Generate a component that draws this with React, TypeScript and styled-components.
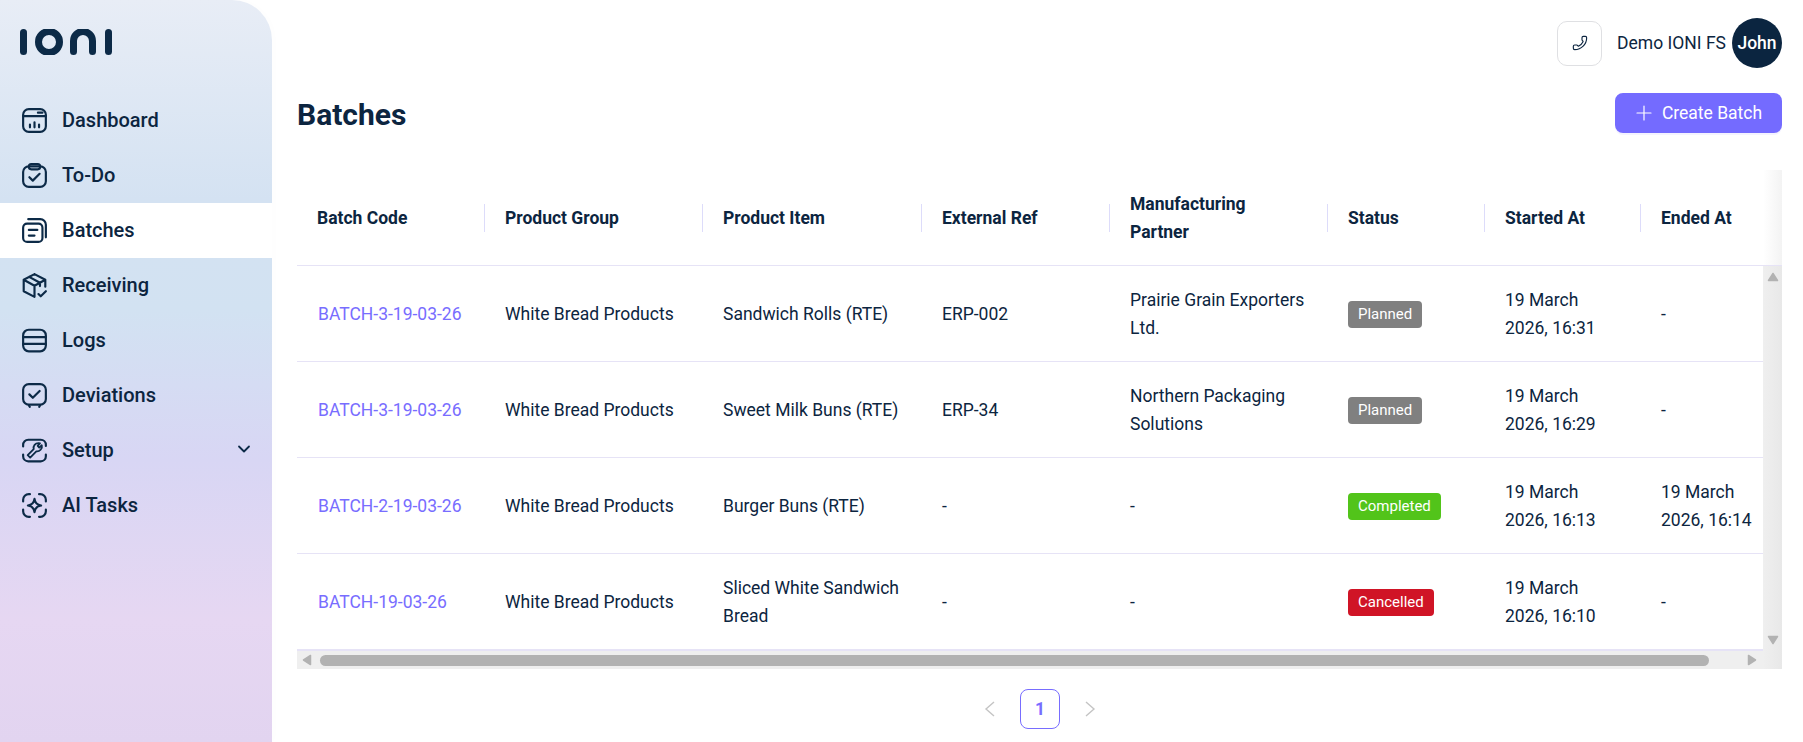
import React from 'react';
import styled, { createGlobalStyle } from 'styled-components';
import { Phone, Plus } from 'lucide-react';

const GlobalStyle = createGlobalStyle`
  html, body { margin: 0; padding: 0; height: 100%; background: #fff; overflow: hidden; }
  * { box-sizing: border-box; }
  body { font-family: Roboto, "Liberation Sans", sans-serif; color: #0c2540; }
`;

const Page = styled.div`
  display: flex;
  width: 1803px;
  height: 742px;
  overflow: hidden;
`;

const Sidebar = styled.aside`
  flex: 0 0 272px;
  height: 742px;
  border-top-right-radius: 40px;
  background: linear-gradient(180deg, #e8edf6 0px, #d4e2f2 200px, #d2e2f2 310px, #d8d6f4 460px, #e6d7f2 620px, #e2d4f0 742px);
  box-shadow: 2px 0 8px rgba(0, 0, 0, 0.01);
`;

const LogoBox = styled.div`
  height: 93px;
  padding: 29px 0 0 20px;
  display: flex;
  align-items: flex-start;
`;

const Nav = styled.nav`
  display: flex;
  flex-direction: column;
`;

const NavRow = styled.div<{ $active?: boolean }>`
  height: 55px;
  display: flex;
  align-items: center;
  padding-left: 22px;
  padding-right: 21px;
  gap: 15px;
  font-size: 20px;
  line-height: 28px;
  font-weight: 500;
  color: #0c2540;
  background: ${(p) => (p.$active ? '#fff' : 'transparent')};
`;

const NavLabel = styled.span`
  flex: 1;
  padding-bottom: 2px;
`;

const NavChevron = styled.svg`
  margin-bottom: 4px;
`;

const Main = styled.main`
  flex: 1;
  min-width: 0;
  padding: 18px 21px 0 25px;
  display: flex;
  flex-direction: column;
`;

const TopBar = styled.header`
  height: 50px;
  display: flex;
  justify-content: flex-end;
  align-items: center;
`;

const PhoneButton = styled.button`
  width: 45px;
  height: 45px;
  padding: 0;
  margin-right: 15px;
  border: 1px solid #dfe0e3;
  border-radius: 10px;
  background: #fff;
  color: #0c2540;
  display: flex;
  align-items: center;
  justify-content: center;
`;

const UserName = styled.span`
  font-size: 17.5px;
  margin-right: 6px;
`;

const Avatar = styled.div`
  width: 50px;
  height: 50px;
  border-radius: 50%;
  background: #0b2540;
  color: #fff;
  font-size: 17.5px;
  font-weight: 500;
  display: flex;
  align-items: center;
  justify-content: center;
`;

const TitleRow = styled.div`
  margin-top: 25px;
  height: 40px;
  display: flex;
  justify-content: space-between;
  align-items: center;
`;

const Title = styled.h1`
  margin: 2px 0 0;
  font-size: 30px;
  font-weight: 700;
  color: #0c2540;
`;

const CreateButton = styled.button`
  width: 167px;
  height: 40px;
  border: 0;
  padding: 0 3px 0 0;
  border-radius: 8px;
  background: #746bff;
  color: #fff;
  font-family: inherit;
  font-size: 17.5px;
  font-weight: 400;
  display: flex;
  align-items: center;
  justify-content: center;
  gap: 6px;
  box-shadow: 0 2px 0 rgba(116, 107, 255, 0.08);
`;

const TableFrame = styled.section`
  margin-top: 37px;
  position: relative;
`;

const columns = '188px 218px 219px 188px 218px 157px 156px 122px';

const HeadRow = styled.div`
  display: grid;
  grid-template-columns: ${columns};
  height: 96px;
  border-bottom: 1px solid #e6e3f6;
  overflow: hidden;
`;

const HeadCell = styled.div`
  position: relative;
  padding: 0 20px;
  display: flex;
  align-items: center;
  font-size: 17.5px;
  font-weight: 700;
  line-height: 28px;
  &:not(:last-child)::after {
    content: '';
    position: absolute;
    right: 0;
    top: 34px;
    height: 28px;
    width: 1px;
    background: #dddcfa;
  }
`;

const EdgeShade = styled.div`
  position: absolute;
  top: 0;
  right: 0;
  width: 19px;
  height: 95px;
  background: linear-gradient(90deg, rgba(238, 238, 238, 0), rgba(238, 238, 238, 0.7));
  pointer-events: none;
`;

const BodyGrid = styled.div`
  display: grid;
  grid-template-columns: 1466px 19px;
  grid-template-rows: 384px 19px;
`;

const RowsArea = styled.div`
  overflow: hidden;
`;

const Row = styled.div`
  display: grid;
  grid-template-columns: ${columns};
  height: 96px;
  border-bottom: 1px solid #e6e3f6;
`;

const Cell = styled.div`
  padding: 0 20px;
  display: flex;
  align-items: center;
  font-size: 17.5px;
  line-height: 28px;
  &:last-child {
    padding-right: 6px;
  }
`;

const BatchLink = styled.a`
  color: #786dff;
  margin-left: 1px;
`;

const tones = { gray: '#808080', green: '#52c41a', red: '#d01426' };

const Badge = styled.span<{ $tone: keyof typeof tones }>`
  display: inline-block;
  height: 27px;
  line-height: 27px;
  margin-top: 2px;
  padding: 0 10px;
  border-radius: 4px;
  font-size: 15px;
  color: #fff;
  background: ${(p) => tones[p.$tone]};
`;

const VTrack = styled.div`
  grid-row: 1 / span 2;
  grid-column: 2;
  background: linear-gradient(90deg, #efefef, #e8e8e8);
  display: flex;
  flex-direction: column;
  justify-content: space-between;
  align-items: center;
  padding: 6px 0 24px;
`;

const HTrack = styled.div`
  background: #efefef;
  border-top: 1px solid #e6e3f6;
  display: flex;
  align-items: center;
  padding: 0 6px 0 5px;
`;

const HThumb = styled.div`
  width: 1389px;
  height: 11px;
  margin: 0 auto 0 8px;
  border-radius: 6px;
  background: #b2b2b2;
`;

const Pager = styled.div`
  margin-top: 20px;
  display: flex;
  justify-content: center;
  align-items: center;
  gap: 22px;
  padding-left: 1px;
`;

const PageNum = styled.div`
  width: 40px;
  height: 40px;
  border: 1px solid #786dff;
  border-radius: 8px;
  color: #786dff;
  font-size: 17.5px;
  font-weight: 700;
  display: flex;
  align-items: center;
  justify-content: center;
`;

const NavIcon: React.FC<{ children: React.ReactNode }> = ({ children }) => (
  <svg width="25" height="25" viewBox="1 1 22 22" fill="none" stroke="#0c2a47" strokeWidth="1.9" strokeLinecap="round" strokeLinejoin="round">
    {children}
  </svg>
);

const Logo = () => (
  <svg width="92" height="26" viewBox="0 0 92 26" fill="none" stroke="#0c2a47" strokeWidth="7" strokeLinecap="round">
    <path d="M3.5 3.5V22.5" />
    <circle cx="29" cy="13" r="10.5" />
    <path d="M53.5 22.5V12a9.5 9.5 0 0 1 19 0V22.5" />
    <path d="M88.5 3.5V22.5" />
  </svg>
);

const items: { label: string; icon: React.ReactNode; active?: boolean; chevron?: boolean }[] = [
  {
    label: 'Dashboard',
    icon: (
      <>
        <rect x="2" y="2" width="20" height="20" rx="5" />
        <path d="M2 8.2H22M15 5.1H19M8 18V15.5M12 18V13.5M16 18V15.5" />
      </>
    ),
  },
  {
    label: 'To-Do',
    icon: (
      <>
        <rect x="2" y="4" width="20" height="18" rx="5" />
        <rect x="7" y="2" width="10" height="4.6" rx="2.2" />
        <path d="M7.5 13.5l3 3 6-6" />
      </>
    ),
  },
  {
    label: 'Batches',
    active: true,
    icon: (
      <>
        <rect x="2" y="6" width="17" height="16" rx="3.5" />
        <path d="M6.5 2H17a5 5 0 0 1 5 5V18M7 11.5H14.5M7 16.5H12" />
      </>
    ),
  },
  {
    label: 'Receiving',
    icon: (
      <>
        <path d="M12 2L21.5 7V13M21.5 7L12 12.2L2.5 7L12 2ZM2.5 7V17L12 22V12.2M7.3 4.4L16.8 9.6V12.5" />
        <path d="M15.5 19.5l2 2 4.5-4.5" />
      </>
    ),
  },
  {
    label: 'Logs',
    icon: (
      <>
        <rect x="2" y="2.5" width="20" height="19" rx="5" />
        <path d="M2 9H22M2 15H22" />
      </>
    ),
  },
  {
    label: 'Deviations',
    icon: (
      <>
        <rect x="2" y="2" width="20" height="18" rx="5" />
        <path d="M7.5 11l3 3 6-6M7 20.5L7.8 22M17 20.5L16.2 22" />
      </>
    ),
  },
  {
    label: 'Setup',
    chevron: true,
    icon: (
      <>
        <path d="M2 8.5V7a4.5 4.5 0 0 1 4.5-4.5H17.5A4.5 4.5 0 0 1 22 7V8M2 15.5V17a4.5 4.5 0 0 0 4.5 4.5H17.5A4.5 4.5 0 0 0 22 17V15.5" />
        <path d="M8.2 18.2L6 16L11.3 10.7C10.7 8 12.6 5.5 15.5 5.5L16.8 5.8L14.8 8L16.2 9.5L18.4 7.4C19.2 10.3 16.5 13.2 13.6 12.8Z" strokeWidth="1.6" />
      </>
    ),
  },
  {
    label: 'AI Tasks',
    icon: (
      <>
        <path d="M2 8.5V7a5 5 0 0 1 5-5H8M16 2H17a5 5 0 0 1 5 5V8.5M22 15.5V17a5 5 0 0 1-5 5H16M8 22H7a5 5 0 0 1-5-5V15.5" />
        <path d="M12 6.2C12.5 10 14 11.5 17.8 12C14 12.5 12.5 14 12 17.8C11.5 14 10 12.5 6.2 12C10 11.5 11.5 10 12 6.2Z" />
      </>
    ),
  },
];

const headers = ['Batch Code', 'Product Group', 'Product Item', 'External Ref', 'Manufacturing Partner', 'Status', 'Started At', 'Ended At'];

const rows: {
  code: string;
  item: string;
  ref: string;
  partner: string;
  status: string;
  tone: keyof typeof tones;
  started: string;
  ended: string;
}[] = [
  { code: 'BATCH-3-19-03-26', item: 'Sandwich Rolls (RTE)', ref: 'ERP-002', partner: 'Prairie Grain Exporters Ltd.', status: 'Planned', tone: 'gray', started: '19 March 2026, 16:31', ended: '-' },
  { code: 'BATCH-3-19-03-26', item: 'Sweet Milk Buns (RTE)', ref: 'ERP-34', partner: 'Northern Packaging Solutions', status: 'Planned', tone: 'gray', started: '19 March 2026, 16:29', ended: '-' },
  { code: 'BATCH-2-19-03-26', item: 'Burger Buns (RTE)', ref: '-', partner: '-', status: 'Completed', tone: 'green', started: '19 March 2026, 16:13', ended: '19 March 2026, 16:14' },
  { code: 'BATCH-19-03-26', item: 'Sliced White Sandwich Bread', ref: '-', partner: '-', status: 'Cancelled', tone: 'red', started: '19 March 2026, 16:10', ended: '-' },
];

const Arrow: React.FC<{ d: string; w: number; h: number }> = ({ d, w, h }) => (
  <svg width={w} height={h} viewBox={`0 0 ${w} ${h}`} fill="#b2b2b2" stroke="#b2b2b2" strokeWidth="1.5" strokeLinejoin="round">
    <path d={d} />
  </svg>
);

const Chevron: React.FC<{ d: string }> = ({ d }) => (
  <svg width="16" height="16" viewBox="0 0 16 16" fill="none" stroke="#c4c4c4" strokeWidth="1.4">
    <path d={d} />
  </svg>
);

export default function App() {
  return (
    <Page>
      <GlobalStyle />
      <Sidebar>
        <LogoBox>
          <Logo />
        </LogoBox>
        <Nav>
          {items.map((it) => (
            <NavRow key={it.label} $active={it.active}>
              <NavIcon>{it.icon}</NavIcon>
              <NavLabel>{it.label}</NavLabel>
              {it.chevron && (
                <NavChevron width="14" height="14" viewBox="0 0 14 14" fill="none" stroke="#0c2a47" strokeWidth="1.8" strokeLinecap="round" strokeLinejoin="round">
                  <path d="M2 4.5L7 9.5L12 4.5" />
                </NavChevron>
              )}
            </NavRow>
          ))}
        </Nav>
      </Sidebar>
      <Main>
        <TopBar>
          <PhoneButton>
            <Phone size={16} strokeWidth={1.7} style={{ transform: 'scaleX(-1)' }} />
          </PhoneButton>
          <UserName>Demo IONI FS</UserName>
          <Avatar>John</Avatar>
        </TopBar>
        <TitleRow>
          <Title>Batches</Title>
          <CreateButton>
            <Plus size={24} strokeWidth={1.2} />
            Create Batch
          </CreateButton>
        </TitleRow>
        <TableFrame>
          <HeadRow>
            {headers.map((h) => (
              <HeadCell key={h}>{h}</HeadCell>
            ))}
          </HeadRow>
          <EdgeShade />
          <BodyGrid>
            <RowsArea>
              {rows.map((r, i) => (
                <Row key={i}>
                  <Cell>
                    <BatchLink>{r.code}</BatchLink>
                  </Cell>
                  <Cell>White Bread Products</Cell>
                  <Cell>{r.item}</Cell>
                  <Cell>{r.ref}</Cell>
                  <Cell>{r.partner}</Cell>
                  <Cell>
                    <Badge $tone={r.tone}>{r.status}</Badge>
                  </Cell>
                  <Cell>{r.started}</Cell>
                  <Cell>{r.ended}</Cell>
                </Row>
              ))}
            </RowsArea>
            <VTrack>
              <Arrow w={12} h={10} d="M6 1.5L10.5 8.5H1.5Z" />
              <Arrow w={12} h={10} d="M6 8.5L10.5 1.5H1.5Z" />
            </VTrack>
            <HTrack>
              <Arrow w={10} h={12} d="M1.5 6L8.5 1.5V10.5Z" />
              <HThumb />
              <Arrow w={10} h={12} d="M8.5 6L1.5 1.5V10.5Z" />
            </HTrack>
          </BodyGrid>
        </TableFrame>
        <Pager>
          <Chevron d="M12 1L4 8L12 15" />
          <PageNum>1</PageNum>
          <Chevron d="M4 1L12 8L4 15" />
        </Pager>
      </Main>
    </Page>
  );
}
